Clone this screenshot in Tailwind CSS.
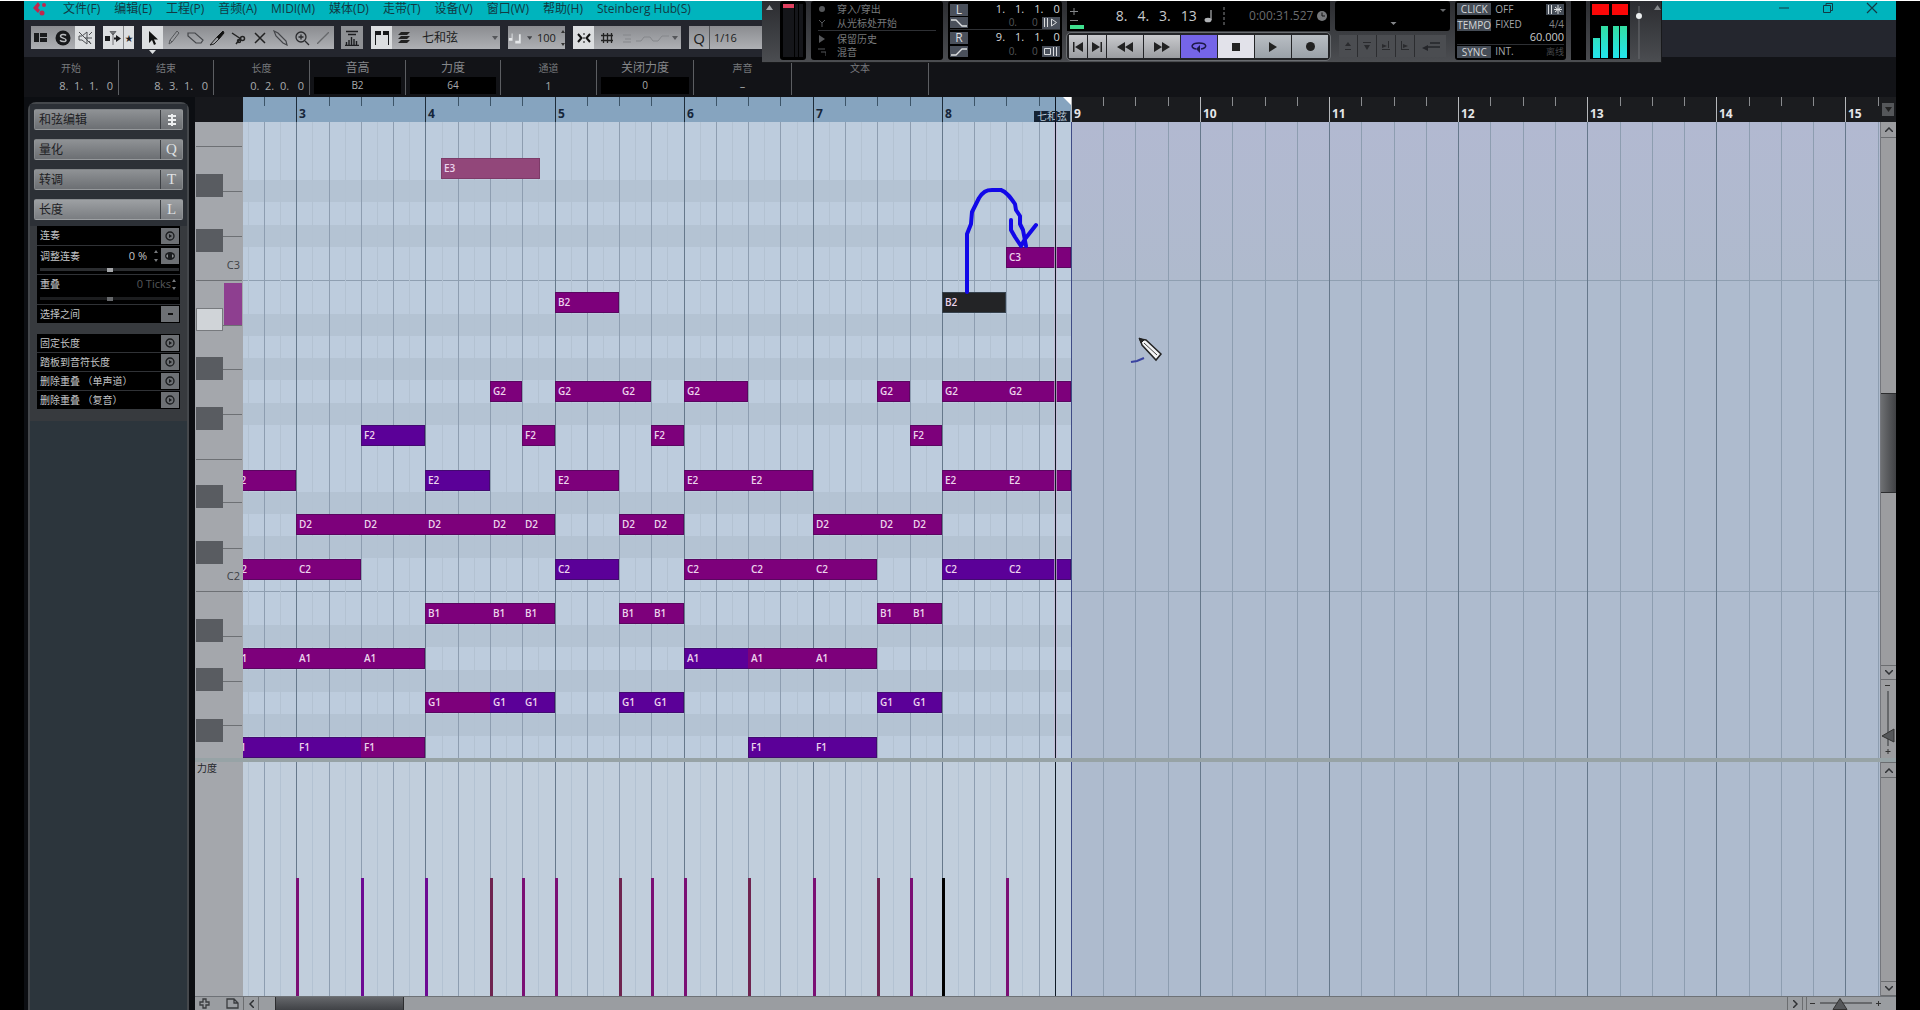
<!DOCTYPE html>
<html lang="zh-CN">
<head>
    <meta charset="UTF-8">
    <meta name="viewport" content="width=device-width, initial-scale=1.0">
    <title>Cubase - 钢琴卷帘</title>
    <script src="https://cdn.jsdelivr.net/npm/@tailwindcss/browser@4"></script>
</head>
<body class="bg-black font-['Open_Sans','Noto_Sans_CJK_SC',sans-serif]">
<div class="relative h-screen overflow-hidden flex flex-col border-t border-white px-6">

    <!-- Menu -->
    <nav class="h-[19px] shrink-0 bg-[#00b4bd] text-[#123a44] text-[12px] leading-[16px] flex items-start pl-2">
        <svg class="w-4 h-[15px] mr-[15px]" viewBox="0 0 16 15"><path d="M6 1L1 7l5 5 2-3-2-2 2-3z" fill="#c0264e"/><circle cx="12" cy="4" r="2" fill="#c0264e"/><circle cx="10" cy="12" r="2.500" fill="#c0264e"/></svg>
        <div class="flex gap-[14px]">
            <a href="#">文件(F)</a>
            <a href="#">编辑(E)</a>
            <a href="#">工程(P)</a>
            <a href="#">音频(A)</a>
            <a href="#">MIDI(M)</a>
            <a href="#">媒体(D)</a>
            <a href="#">走带(T)</a>
            <a href="#">设备(V)</a>
            <a href="#">窗口(W)</a>
            <a href="#">帮助(H)</a>
            <a href="#">Steinberg Hub(S)</a>
        </div>
        <div class="ml-auto flex gap-8 pr-[18px] pt-px">
            <button aria-label="最小化"><svg class="w-3 h-3" viewBox="0 0 12 12"><path d="M1 6h10" stroke="#123a44"/></svg></button>
            <button aria-label="还原"><svg class="w-3 h-3" viewBox="0 0 12 12" fill="none" stroke="#123a44"><path d="M1.500 3.500h7v7h-7zM4 3.500v-2h6.500v7H9"/></svg></button>
            <button aria-label="关闭"><svg class="w-3 h-3" viewBox="0 0 12 12"><path d="M1 1l10 10M11 1L1 11" stroke="#123a44" stroke-width="1.200"/></svg></button>
        </div>
    </nav>

    <!-- Toolbar -->
    <div class="h-[37px] shrink-0 bg-[#24262e] flex items-start gap-2 pl-[7px] pt-[6px] text-[#1c1d20]">
        <div class="h-[23px] flex bg-linear-to-b from-[#8b8c90] to-[#aeb0b4]">
            <button aria-label="布局" class="w-5 grid place-items-center"><svg class="w-4 h-3" viewBox="0 0 16 12"><path d="M1 1h5v9H1zM7 1h7v4H7zM7 6h7v4H7z" fill="#1a1b1d"/></svg></button>
            <button aria-label="独奏" class="w-6 grid place-items-center"><svg class="w-4 h-4" viewBox="0 0 16 16"><circle cx="8" cy="8" r="7.500" fill="#17181a"/><path d="M11 5.500C10 4 5.500 4 5.500 6.200S11 7.800 11 10s-4.500 2-6 .3" fill="none" stroke="#b8babd" stroke-width="1.500"/></svg></button>
            <button aria-label="监听" class="w-5 grid place-items-center bg-[#dcdee0]"><svg class="w-4 h-4" viewBox="0 0 16 16" fill="none" stroke="#4d4f53"><path d="M2 6h3l5-4v12L5 10H2zM8 8h7M12 5l3-3M12 11l2 3M2 2l12 12"/></svg></button>
        </div>
        <div class="h-[23px] flex bg-[#dcdee0]">
            <button aria-label="自动滚动" class="w-[21px] grid place-items-center border-r border-[#85878a]"><svg class="w-4 h-4" viewBox="0 0 16 16"><path d="M0 6h5v5H0z" fill="#1a1b1d"/><path d="M8 3v12M5 1.500h6L8 5z" fill="#77797c" stroke="#55575a" stroke-width=".8"/><path d="M9 7.500h2V5l5 3.500-5 3.500V9.500H9z" fill="#1a1b1d"/></svg></button>
            <button aria-label="暂停滚动" class="w-[10px] text-[8px]">★</button>
        </div>
        <div class="h-[23px] flex bg-linear-to-b from-[#8b8c90] to-[#aeb0b4]">
            <button aria-label="选择" class="relative w-[21px] grid place-items-center bg-[#dcdee0]"><svg class="w-4 h-4" viewBox="0 0 16 16"><path d="M4 1v12l3-3 2 5 2-1-2-4.500h4z" fill="#111"/></svg><svg class="absolute top-[24px] left-[7px] w-[7px] h-1" viewBox="0 0 7 4"><path d="M0 0h7L3.500 4z" fill="#dcdee0"/></svg></button>
            <button aria-label="铅笔" class="w-[22px] grid place-items-center"><svg class="w-4 h-4" viewBox="0 0 16 16" fill="none" stroke="#55575a"><path d="M3 14l1-4 7-9 2 2-7 9zM4 10l2 2"/></svg></button>
            <button aria-label="橡皮" class="w-[21px] grid place-items-center"><svg class="w-[18px] h-4" viewBox="0 0 18 16" fill="none" stroke="#44464a" stroke-width="1.200"><path d="M1 3h7l8 7-2 3H9L1 6z"/></svg></button>
            <button aria-label="修剪" class="w-[21px] grid place-items-center"><svg class="w-4 h-4" viewBox="0 0 16 16"><path d="M14 1l1 2-5 6-2-2z" fill="#111" stroke="#111"/><path d="M8 7l2 2-5 5-4 1z" fill="none" stroke="#222"/></svg></button>
            <button aria-label="剪刀" class="w-[22px] grid place-items-center"><svg class="w-4 h-4" viewBox="0 0 16 16" fill="none" stroke="#222" stroke-width="1.500"><path d="M2 3l9 6M6 14l4-5"/><circle cx="12.500" cy="8.500" r="2"/><circle cx="9" cy="11" r="1.500"/></svg></button>
            <button aria-label="静音" class="w-[21px] grid place-items-center"><svg class="w-3 h-3" viewBox="0 0 12 12"><path d="M1 1l10 10M11 1L1 11" stroke="#222" stroke-width="1.500"/></svg></button>
            <button aria-label="胶水" class="w-[21px] grid place-items-center"><svg class="w-4 h-4" viewBox="0 0 16 16" fill="none" stroke="#44464a" stroke-width="1.200"><path d="M1 1l4 2 8 8 1 4-4-2-7-7z"/></svg></button>
            <button aria-label="缩放" class="w-[21px] grid place-items-center"><svg class="w-4 h-4" viewBox="0 0 16 16" fill="none" stroke="#2a2b2e" stroke-width="1.300"><circle cx="7" cy="7" r="5"/><path d="M11 11l4 4M4.500 7h5M7 4.500v5"/></svg></button>
            <button aria-label="直线" class="w-[22px] grid place-items-center"><svg class="w-3 h-3" viewBox="0 0 12 12"><path d="M0 12L12 0" stroke="#66686b" stroke-width="1.300"/></svg></button>
        </div>
        <button aria-label="控制器" class="h-[23px] w-[22px] -ml-px bg-[#8f9195] grid place-items-center"><svg class="w-4 h-4" viewBox="0 0 16 16" stroke="#1c1d20" fill="none"><path d="M2 1.500h12M4 4.500h8M1 15.500h14M2.500 15v-3M5 15v-5M7.500 15V7M10 15V9M12.500 15v-4" stroke-width="1.400"/></svg></button>
        <div class="h-[23px] w-[129px] flex items-center bg-linear-to-b from-[#8b8c90] to-[#aeb0b4]">
            <button aria-label="显示音符" class="w-[21px] h-full grid place-items-center bg-[#dcdee0]"><svg class="w-4 h-4" viewBox="0 0 16 16"><path d="M1 1h6v4H2v10H1zM9 1h6v14h-1V5H9z" fill="#17181a"/></svg></button>
            <svg class="w-3 h-[14px] ml-[6px]" viewBox="0 0 12 14"><path d="M3 1h9l-3 3H0zM3 5h9l-3 3H0zM3 9h9l-3 3H0z" fill="#222"/></svg>
            <select aria-label="部件" class="appearance-none flex-1 pl-[12px] text-[12px] leading-[20px]"><option>七和弦</option></select>
            <svg class="w-[6px] h-1 mr-[2px]" viewBox="0 0 6 4"><path d="M0 0h6L3 4z" fill="#55575a"/></svg>
        </div>
        <div class="h-[23px] w-[57px] flex items-center bg-linear-to-b from-[#8b8c90] to-[#aeb0b4]">
            <svg class="w-4 h-4" viewBox="0 0 16 16" fill="#e4e6e8"><path d="M4 3h1v8H1V8h3zM12 4h2v10H8v-3h4z"/></svg>
            <svg class="w-[6px] h-1 ml-1" viewBox="0 0 6 4"><path d="M0 0h6L3 4z" fill="#44464a"/></svg>
            <input aria-label="插入力度" value="100" class="w-6 ml-[5px] text-[11px] leading-[20px]">
            <span class="flex flex-col justify-between h-4"><svg class="w-1 h-[3px]" viewBox="0 0 4 3"><path d="M0 3h4L2 0z" fill="#333"/></svg><svg class="w-1 h-[3px]" viewBox="0 0 4 3"><path d="M0 0h4L2 3z" fill="#333"/></svg></span>
        </div>
        <div class="h-[23px] w-[108px] flex items-center bg-linear-to-b from-[#8b8c90] to-[#aeb0b4]">
            <button aria-label="吸附" class="w-[21px] h-full grid place-items-center bg-[#dcdee0]"><svg class="w-[14px] h-3" viewBox="0 0 14 12" fill="none" stroke="#111" stroke-width="2"><path d="M1 2l3.500 4L1 10M13 2L9.500 6l3.500 4"/><path d="M7 1v10" stroke-width="1" stroke-dasharray="2 2"/></svg></button>
            <svg class="w-3 h-3 ml-[7px]" viewBox="0 0 12 12" stroke="#222" stroke-width="1.300"><path d="M2.500 1v10M6.500 1v10M10.500 1v10M0 3.500h12M0 8.500h12"/></svg>
            <svg class="w-[48px] h-3 ml-[9px]" viewBox="0 0 48 12" stroke="#85878b" fill="none"><path d="M1 3h8M3 7h6M1 10h8M14 9h5l3-4h6l3 4h5l4-5h7"/></svg>
            <svg class="w-[6px] h-1 ml-auto mr-[3px]" viewBox="0 0 6 4"><path d="M0 0h6L3 4z" fill="#55575a"/></svg>
        </div>
        <div class="h-[23px] w-[90px] flex items-center bg-linear-to-b from-[#8b8c90] to-[#aeb0b4]">
            <button aria-label="应用量化" class="w-[21px] h-full border-r border-[#55575a] text-[15px] leading-[20px]">Q</button>
            <select aria-label="量化预设" class="appearance-none flex-1 pl-[4px] text-[11px] leading-[20px]"><option>1/16</option></select>
        </div>
    </div>

    <!-- Info line -->
    <div class="h-10 shrink-0 bg-[#121317] flex pt-[3px] pb-[2px] text-[#a9abad] text-[10px] text-center">
        <label class="w-[95px] pt-px border-r border-[#5c5e62] flex flex-col"><span class="leading-[14px] h-[17px] text-[#77797c]">开始</span><input value="8.  1.  1.   0" class="w-full pr-[5px] text-right text-[11px] leading-[16px]"></label>
        <label class="w-[95px] pt-px border-r border-[#5c5e62] flex flex-col"><span class="leading-[14px] h-[17px] text-[#77797c]">结束</span><input value="8.  3.  1.   0" class="w-full pr-[5px] text-right text-[11px] leading-[16px]"></label>
        <label class="w-24 pt-px border-r border-[#5c5e62] flex flex-col"><span class="leading-[14px] h-[17px] text-[#77797c]">长度</span><input value="0.  2.  0.   0" class="w-full pr-[5px] text-right text-[11px] leading-[16px]"></label>
        <label class="w-24 px-1 border-r border-[#5c5e62] flex flex-col"><span class="leading-[15px] h-[17px] text-[12px] text-[#85878a]">音高</span><input value="B2" class="w-full bg-black text-center text-[10px] leading-[17px]"></label>
        <label class="w-[95px] px-1 border-r border-[#5c5e62] flex flex-col"><span class="leading-[15px] h-[17px] text-[12px] text-[#85878a]">力度</span><input value="64" class="w-full bg-black text-center text-[10px] leading-[17px]"></label>
        <label class="w-24 pt-px px-1 border-r border-[#5c5e62] flex flex-col"><span class="leading-[14px] h-[17px] text-[#77797c]">通道</span><input value="1" class="w-full text-center text-[11px] leading-[16px]"></label>
        <label class="w-[97px] px-1 border-r border-[#5c5e62] flex flex-col"><span class="leading-[15px] h-[17px] text-[12px] text-[#85878a]">关闭力度</span><input value="0" class="w-full bg-black text-center text-[10px] leading-[17px]"></label>
        <label class="w-[98px] pt-px px-1 border-r border-[#5c5e62] flex flex-col"><span class="leading-[14px] h-[17px] text-[#77797c]">声音</span><input value="–" class="w-full text-center text-[11px] leading-[16px]"></label>
        <label class="w-[137px] pt-px px-1 border-r border-[#5c5e62] flex flex-col"><span class="leading-[14px] h-[17px] text-[#77797c]">文本</span><input value="" class="w-full"></label>
    </div>

    <div class="flex-1 min-h-0 flex bg-[#0c0e12]">
        <!-- Inspector -->
        <aside class="w-[161px] ml-1 mr-[2px] mt-[5px] shrink-0 rounded-t-lg border-2 border-b-0 border-[#45484c] bg-[#2c353c] text-[12px] text-[#1d2023]">
            <div class="flex flex-col gap-[9px] px-[4px] pt-[5px] pb-[6px] bg-[#2c3036]">
                <button class="h-[21px] flex items-center rounded-[2px] bg-linear-to-b from-[#8f9295] to-[#6c6f73] border border-[#a0a2a5]/40"><span class="flex-1 text-left pl-1 leading-[18px]">和弦编辑</span><span class="w-[22px] h-full border-l border-[#3c3f43] grid place-items-center"><svg class="w-3 h-[14px]" viewBox="0 0 12 14" stroke="#eceeef" stroke-width="2"><path d="M2 3h8M2 7h8M2 11h8M6 1v12"/></svg></span></button>
                <button class="h-[21px] flex items-center rounded-[2px] bg-linear-to-b from-[#8f9295] to-[#6c6f73] border border-[#a0a2a5]/40"><span class="flex-1 text-left pl-1 leading-[18px]">量化</span><span class="w-[22px] h-full border-l border-[#3c3f43] text-[#dfe1e3] text-[15px] leading-[18px] font-['Liberation_Serif',serif]">Q</span></button>
                <button class="h-[21px] flex items-center rounded-[2px] bg-linear-to-b from-[#8f9295] to-[#6c6f73] border border-[#a0a2a5]/40"><span class="flex-1 text-left pl-1 leading-[18px]">转调</span><span class="w-[22px] h-full border-l border-[#3c3f43] text-[#dfe1e3] text-[15px] leading-[18px] font-['Liberation_Serif',serif]">T</span></button>
                <button class="h-[21px] flex items-center rounded-[2px] bg-linear-to-b from-[#9da0a3] to-[#7a7d81] border border-[#a0a2a5]/40"><span class="flex-1 text-left pl-1 leading-[18px]">长度</span><span class="w-[22px] h-full border-l border-[#3c3f43] text-[#dfe1e3] text-[15px] leading-[18px] font-['Liberation_Serif',serif]">L</span></button>
            </div>
            <div class="bg-[#373a3e] px-[7px] pb-3 text-[10px] text-[#c3c5c7]">
                <div class="flex flex-col gap-px bg-[#303236]">
                    <div class="h-[19px] flex items-center justify-between bg-black pl-[3px]">连奏<button aria-label="连奏" class="w-[18px] h-4 mr-px bg-[#6d7074] grid place-items-center"><svg class="w-[10px] h-[10px]" viewBox="0 0 10 10"><circle cx="5" cy="5" r="4" fill="none" stroke="#1a1c1e" stroke-width="1.300"/><path d="M4 3l3 2-3 2z" fill="#1a1c1e"/></svg></button></div>
                    <div class="h-7 bg-black pl-[3px]">
                        <div class="h-[20px] flex items-center"><label for="legato">调整连奏</label><span class="ml-auto mr-[7px] text-[11px]">0 %</span><span class="flex flex-col gap-[6px] mr-[3px]"><svg class="w-1 h-[3px]" viewBox="0 0 4 3"><path d="M0 3h4L2 0z" fill="#77797c"/></svg><svg class="w-1 h-[3px]" viewBox="0 0 4 3"><path d="M0 0h4L2 3z" fill="#77797c"/></svg></span><button aria-label="连奏模式" class="w-[18px] h-4 mr-px bg-[#6d7074] grid place-items-center"><svg class="w-3 h-[10px]" viewBox="0 0 12 10"><ellipse cx="6" cy="5" rx="5" ry="4" fill="#1a1c1e"/><path d="M2 5l2-2v4zM10 5L8 3v4z" fill="#8a8d90"/></svg></button></div>
                        <input id="legato" type="range" class="block w-[139px] h-[3px] mt-[2px] appearance-none bg-[#2b2d30] [&::-webkit-slider-thumb]:appearance-none [&::-webkit-slider-thumb]:w-[6px] [&::-webkit-slider-thumb]:h-[4px] [&::-webkit-slider-thumb]:bg-[#a5a7aa]">
                    </div>
                    <div class="h-[29px] bg-black pl-[3px]">
                        <div class="h-[18px] flex items-center"><label for="overlap">重叠</label><span class="ml-auto text-[11px] text-[#55575a]">0 Ticks</span><span class="flex flex-col gap-[5px] ml-px mr-[4px]"><svg class="w-1 h-[3px]" viewBox="0 0 4 3"><path d="M0 3h4L2 0z" fill="#77797c"/></svg><svg class="w-1 h-[3px]" viewBox="0 0 4 3"><path d="M0 0h4L2 3z" fill="#77797c"/></svg></span></div>
                        <input id="overlap" type="range" class="block w-[139px] h-[3px] mt-[4px] appearance-none bg-[#1c1d1f] [&::-webkit-slider-thumb]:appearance-none [&::-webkit-slider-thumb]:w-[6px] [&::-webkit-slider-thumb]:h-[4px] [&::-webkit-slider-thumb]:bg-[#66686b]">
                    </div>
                    <div class="h-[18px] flex items-center justify-between bg-black pl-[3px]">选择之间<button aria-label="选择之间" class="w-[18px] h-4 mr-px bg-[#6d7074] grid place-items-center"><span class="w-[5px] h-[2px] bg-[#111]"></span></button></div>
                </div>
                <div id="functions" class="mt-[11px] flex flex-col gap-px bg-[#303236]"></div>
            </div>
        </aside>

        <!-- Key editor -->
        <main class="flex-1 min-w-0 flex flex-col ml-1">
            <div class="h-[25px] shrink-0 flex bg-[#1b1c1f]">
                <div class="w-12 bg-[#17181c]"></div>
                <div id="ruler" class="relative flex-1 overflow-hidden text-[12px] leading-[14px] font-bold"></div>
                <button aria-label="标尺格式" class="w-3 h-[13px] mt-[6px] ml-[2px] mr-[2px] bg-[#55575a] grid place-items-center"><svg class="w-[7px] h-[5px]" viewBox="0 0 7 5"><path d="M0 0h7L3.500 5z" fill="#222"/></svg></button>
            </div>
            <div class="flex-1 min-h-0 flex">
                <div id="keys" class="relative w-12 shrink-0 overflow-hidden bg-[#a4a7ac] text-[11px] leading-[14px] text-[#3d4044]"></div>
                <div id="roll" class="relative flex-1 overflow-hidden bg-[#bdccdd] text-[10px] text-[#ecd3ec]"></div>
                <div class="w-4 shrink-0 flex flex-col bg-[#9c9da0] border-l border-[#74767c]">
                    <button aria-label="向上" class="h-4 border-b border-[#6b6d70] grid place-items-center"><svg class="w-2 h-[5px]" viewBox="0 0 8 5"><path d="M0 5l4-4 4 4" fill="none" stroke="#2f3134" stroke-width="1.500"/></svg></button>
                    <div class="flex-1 pt-[255px]"><div class="h-[100px] border-y border-[#2c2d2f] bg-linear-to-r from-[#6e7073] to-[#404144]"></div></div>
                    <button aria-label="向下" class="h-[15px] border-y border-[#6b6d70] grid place-items-center"><svg class="w-2 h-[5px]" viewBox="0 0 8 5"><path d="M0 0l4 4 4-4" fill="none" stroke="#2f3134" stroke-width="1.500"/></svg></button>
                    <svg class="w-[14px] h-[78px]" viewBox="0 0 14 78"><path d="M4 5.500h5M4.500 71.500h5M7 69v5" stroke="#333"/><path d="M6 11h2v55H6z" fill="#66686b"/><path d="M1 56l12-7v13z" fill="#55575a" stroke="#333"/></svg>
                </div>
            </div>
            <div class="h-1 shrink-0 bg-[#97a3a6]"></div>
            <div class="h-[234px] shrink-0 flex">
                <div class="w-12 bg-[#a4a7ac] text-[10px] leading-[12px] pl-[2px] text-[#26282b]">力度</div>
                <div id="lane" class="relative flex-1 overflow-hidden bg-[#c1cedc]"></div>
                <div class="w-4 shrink-0 flex flex-col justify-between bg-[#9c9da0] border-l border-[#74767c]">
                    <button aria-label="向上" class="h-4 border-y border-[#6b6d70] grid place-items-center"><svg class="w-2 h-[5px]" viewBox="0 0 8 5"><path d="M0 5l4-4 4 4" fill="none" stroke="#2f3134" stroke-width="1.500"/></svg></button>
                    <button aria-label="向下" class="h-[15px] border-y border-[#6b6d70] grid place-items-center"><svg class="w-2 h-[5px]" viewBox="0 0 8 5"><path d="M0 0l4 4 4-4" fill="none" stroke="#2f3134" stroke-width="1.500"/></svg></button>
                </div>
            </div>
            <div class="h-[14px] shrink-0 flex bg-[#9a9da1] border-t border-[#6e7277]">
                <div class="w-12 flex justify-between items-center pl-1 pr-1">
                    <button aria-label="添加控制器"><svg class="block w-[11px] h-[11px]" viewBox="0 0 11 11"><path d="M4 1h3v3h3v3H7v3H4V7H1V4h3z" fill="none" stroke="#3a3c3f" stroke-width="1.300"/></svg></button>
                    <button aria-label="控制器预设"><svg class="block w-[13px] h-[11px]" viewBox="0 0 13 11"><path d="M1 1h7l4 4v5H1zM8 1v4h4" fill="none" stroke="#3a3c3f" stroke-width="1.300"/></svg></button>
                </div>
                <button aria-label="向左" class="w-4 border-x border-[#6b6d70] grid place-items-center"><svg class="w-[5px] h-2" viewBox="0 0 5 8"><path d="M5 0L1 4l4 4" fill="none" stroke="#2f3134" stroke-width="1.500"/></svg></button>
                <div class="flex-1 pl-4"><div class="w-[129px] h-full border-x border-[#2c2d2f] bg-linear-to-b from-[#66686c] to-[#404246]"></div></div>
                <button aria-label="向右" class="w-4 border-x border-[#6b6d70] grid place-items-center"><svg class="w-[5px] h-2" viewBox="0 0 5 8"><path d="M0 0l4 4-4 4" fill="none" stroke="#2f3134" stroke-width="1.500"/></svg></button>
                <svg class="w-[93px] h-[13px]" viewBox="0 0 93 13"><path d="M3.500 0v13" stroke="#6b6d70"/><path d="M7 6.500h5M73 6.500h5M75.500 4v5" stroke="#333"/><path d="M17 6h52" stroke="#66686b" stroke-width="2"/><path d="M30 12.500l7-11 7 11z" fill="#55575a" stroke="#333"/></svg>
            </div>
        </main>
    </div>

    <!-- Transport panel, floats over the toolbar -->
    <section class="absolute left-[762px] top-0 h-[62px] w-[900px] flex bg-linear-to-b from-[#2c2d31] to-[#4b4d51] border-b border-r border-[#18191b] text-[10px]">
        <div class="w-[18px] pt-[4px] pl-[4px]"><svg class="w-[7px] h-[5px]" viewBox="0 0 7 5"><path d="M0 5h7L3.500 0z" fill="#a5a7aa"/></svg></div>
        <div class="w-[26px] h-[59px] bg-black rounded-[3px] flex gap-px px-[3px] pt-[3px] pb-[3px]"><div class="w-3 bg-[#15161a]"><div class="h-[4px] bg-[#e0405f]"></div></div><div class="w-1 bg-[#15161a]"></div><div class="w-1 bg-[#15161a]"></div></div>
        <div class="w-[132px] h-[59px] ml-[5px] bg-black rounded-[3px] px-[7px] pt-px pb-[2px] text-[#77797c]">
            <div class="h-[14px] flex items-center gap-[11px]"><svg class="w-2 h-2" viewBox="0 0 8 8"><circle cx="4" cy="4" r="3" fill="#55575a"/></svg><button class="leading-[14px]">穿入/穿出</button></div>
            <div class="h-[15px] flex items-center gap-[11px] border-b border-[#2e3034]"><svg class="w-2 h-2" viewBox="0 0 8 8"><path d="M1 1l3 3 3-3M4 3v5" fill="none" stroke="#55575a"/></svg><button class="leading-[14px]">从光标处开始</button></div>
            <div class="h-[15px] flex items-center gap-[11px]"><svg class="w-2 h-2" viewBox="0 0 8 8"><path d="M1 0l6 4-6 4z" fill="#55575a"/></svg><button class="leading-[14px]">保留历史</button></div>
            <div class="h-[12px] flex items-center gap-[11px]"><svg class="w-2 h-2" viewBox="0 0 8 8"><path d="M0 1h7M3 4h5v4" fill="none" stroke="#55575a"/></svg><button class="leading-[14px]">混音</button></div>
        </div>
        <div class="w-[114px] h-[59px] ml-[5px] bg-black rounded-[3px] pl-[2px] pr-[2px] py-[2px] text-[11px] text-[#d5d7d9]">
            <div class="h-[13px] flex items-center"><button class="w-[18px] h-3 bg-[#4a505b] text-[12px] leading-[12px] text-[#dcdee0]">L</button><span class="ml-auto flex gap-[10px]"><span>1.</span><span>1.</span><span>1.</span><span>0</span></span></div>
            <div class="h-[14px] flex items-center border-b border-[#2e3034]"><button aria-label="预卷" class="w-[18px] h-[11px] bg-[#4a505b] grid place-items-center"><svg class="w-4 h-2" viewBox="0 0 16 8"><path d="M0 1h5l6 6h5" fill="none" stroke="#dcdee0" stroke-width="1.300"/></svg></button><span class="ml-auto flex gap-[15px] pr-[4px] text-[10px] text-[#55575a]"><span>0.</span><span>0</span></span><button aria-label="预卷开关" class="w-[18px] h-3 bg-[#4a505b] grid place-items-center"><svg class="w-[15px] h-[9px]" viewBox="0 0 15 9"><path d="M1.500 0v9M4.500 0v9M8.500 1v7l5-3.500z" fill="none" stroke="#dcdee0"/></svg></button></div>
            <div class="h-[15px] flex items-center"><button class="w-[18px] h-3 bg-[#4a505b] text-[12px] leading-[12px] text-[#dcdee0]">R</button><span class="ml-auto flex gap-[10px]"><span>9.</span><span>1.</span><span>1.</span><span>0</span></span></div>
            <div class="h-[13px] flex items-center"><button aria-label="后卷" class="w-[18px] h-[11px] bg-[#4a505b] grid place-items-center"><svg class="w-4 h-2" viewBox="0 0 16 8"><path d="M0 7h5l6-6h5" fill="none" stroke="#dcdee0" stroke-width="1.300"/></svg></button><span class="ml-auto flex gap-[15px] pr-[4px] text-[10px] text-[#55575a]"><span>0.</span><span>0</span></span><button aria-label="后卷开关" class="w-[18px] h-[11px] bg-[#4a505b] grid place-items-center"><svg class="w-[15px] h-[9px]" viewBox="0 0 15 9"><path d="M1.500 1.500h6v6h-6zM10.500 0v9M13.500 0v9" fill="none" stroke="#dcdee0"/></svg></button></div>
        </div>
        <div class="w-[264px] ml-[5px] flex flex-col">
            <div class="h-[30px] bg-black flex items-center text-[#c8cacc]">
                <svg class="w-4 h-[26px] ml-[1px]" viewBox="0 0 16 26"><path d="M2 8.500h8M6 5v7M2 17.500h8" stroke="#85878a"/><path d="M2 22h14v4H2z" fill="#3fe08f"/></svg>
                <div class="flex gap-[10px] ml-[32px] text-[14px] leading-[20px]"><span>8.</span><span>4.</span><span>3.</span><span>13</span></div>
                <svg class="w-[10px] h-[14px] ml-[7px]" viewBox="0 0 10 14"><ellipse cx="4" cy="11" rx="3.500" ry="2.300" fill="#b0b2b5"/><path d="M7 11V1" stroke="#b0b2b5" stroke-width="1.200"/></svg>
                <svg class="w-1 h-[18px] ml-2" viewBox="0 0 4 18"><path d="M2 0v18" stroke="#85878a" stroke-dasharray="3 2"/></svg>
                <span class="ml-auto text-[12px] text-[#6a6c6f]">0:00:31.527</span>
                <svg class="w-[10px] h-[10px] ml-1 mr-[3px]" viewBox="0 0 10 10"><circle cx="5" cy="5" r="5" fill="#77797c"/><path d="M5 1.500V5h3" fill="none" stroke="#111"/></svg>
            </div>
            <div class="h-[27px] mt-[2px] rounded-[4px] border-2 border-[#232427] outline outline-[#6b6e72] grid grid-cols-[18px_18px_36px_36px_36px_36px_36px_1fr] gap-px bg-[#232427] text-[#1e2023]">
                <button aria-label="到开头" class="grid place-items-center bg-linear-to-b from-[#c9cacd] to-[#9b9da1]"><svg class="w-3 h-[10px]" viewBox="0 0 12 10"><path d="M1 0h1.500v10H1zM11 0v10L3 5z" fill="#222"/></svg></button>
                <button aria-label="到结尾" class="grid place-items-center bg-linear-to-b from-[#c9cacd] to-[#9b9da1]"><svg class="w-3 h-[10px]" viewBox="0 0 12 10"><path d="M9.500 0H11v10H9.500zM1 0v10l8-5z" fill="#222"/></svg></button>
                <button aria-label="后退" class="grid place-items-center bg-linear-to-b from-[#c9cacd] to-[#9b9da1]"><svg class="w-4 h-[10px]" viewBox="0 0 16 10"><path d="M8 0v10L0 5zM16 0v10L8 5z" fill="#222"/></svg></button>
                <button aria-label="快进" class="grid place-items-center bg-linear-to-b from-[#c9cacd] to-[#9b9da1]"><svg class="w-4 h-[10px]" viewBox="0 0 16 10"><path d="M0 0v10l8-5zM8 0v10l8-5z" fill="#222"/></svg></button>
                <button aria-label="循环" class="grid place-items-center bg-[#7565e8]"><svg class="w-4 h-3" viewBox="0 0 16 12"><path d="M10 8c7-1 6-6-2-6S-1 7 5 8" fill="none" stroke="#1d1947" stroke-width="1.500"/><path d="M5 8l4-4v8z" fill="#1d1947"/></svg></button>
                <button aria-label="停止" class="grid place-items-center bg-[#e2e2ea]"><span class="w-2 h-2 bg-[#222]"></span></button>
                <button aria-label="播放" class="grid place-items-center bg-linear-to-b from-[#b9bec4] to-[#9aa1a8]"><svg class="w-2 h-[10px]" viewBox="0 0 8 10"><path d="M0 0v10l8-5z" fill="#222"/></svg></button>
                <button aria-label="录音" class="grid place-items-center bg-linear-to-b from-[#b9bec4] to-[#9aa1a8]"><span class="w-[9px] h-[9px] rounded-full bg-[#222]"></span></button>
            </div>
        </div>
        <div class="w-[115px] ml-[5px]">
            <div class="relative h-[30px] bg-black rounded-[3px]"><svg class="absolute right-1 top-2 w-[6px] h-[3px]" viewBox="0 0 6 3"><path d="M0 0h6L3 3z" fill="#66686b"/></svg><svg class="absolute left-[55px] bottom-[6px] w-[7px] h-[3px]" viewBox="0 0 6 3"><path d="M0 0h6L3 3z" fill="#85878a"/></svg></div>
            <div class="h-[22px] mt-[4px] mx-[4px] grid grid-cols-[18px_18px_18px_18px_1fr] gap-px bg-[#2c2d30]">
                <button aria-label="标记 1" class="grid place-items-center bg-[#4b4d51]"><svg class="w-2 h-[10px]" viewBox="0 0 8 10"><path d="M1 5h6L4 1zM1 8h6v1H1z" fill="#2a2b2e"/></svg></button>
                <button aria-label="标记 2" class="grid place-items-center bg-[#4b4d51]"><svg class="w-2 h-[10px]" viewBox="0 0 8 10"><path d="M0 1h8v1H0zM1 4h6L4 9z" fill="#2a2b2e"/></svg></button>
                <button aria-label="标记 3" class="grid place-items-center bg-[#4b4d51]"><svg class="w-2 h-[10px]" viewBox="0 0 8 10"><path d="M6 0h1v7H6zM0 3l5 2-5 2zM0 8h8v1H0z" fill="#2a2b2e"/></svg></button>
                <button aria-label="标记 4" class="grid place-items-center bg-[#4b4d51]"><svg class="w-2 h-[10px]" viewBox="0 0 8 10"><path d="M0 0h1v9H0zM2 3l5 2-5 2zM0 8h8v1H0z" fill="#2a2b2e"/></svg></button>
                <button aria-label="标记 5" class="grid place-items-center bg-[#4b4d51]"><svg class="w-[18px] h-[10px]" viewBox="0 0 18 10"><path d="M8 2h10M5 6h13" stroke="#25262a" stroke-width="1.500"/><path d="M0 7l6-3v6z" fill="#25262a"/></svg></button>
            </div>
        </div>
        <div class="w-[111px] h-[59px] ml-[5px] bg-black rounded-[3px] p-[2px] pt-px text-[10px] text-[#a5a7aa]">
            <div class="h-[14px] flex items-center"><button class="w-[34px] h-3 leading-[12px] bg-[#454c56] text-[#d5d7d9]">CLICK</button><span class="ml-1">OFF</span><button aria-label="预备拍" class="ml-auto w-[18px] h-[11px] bg-[#454c56] grid place-items-center"><svg class="w-4 h-[9px]" viewBox="0 0 16 9"><path d="M1.500 0v9M4.500 0v9M11 0v9M7 4.500h8M8 2l6 5M14 2L8 7" stroke="#dcdee0"/></svg></button></div>
            <div class="h-[16px] pt-px flex items-center"><button class="w-[34px] h-3 leading-[12px] bg-[#454c56] text-[#d5d7d9]">TEMPO</button><span class="ml-1">FIXED</span><span class="ml-auto text-[#85878a]">4/4</span></div>
            <div class="h-[13px] text-right text-[11px] leading-[10px] border-b border-[#2e3034] text-[#c8cacc]">60.000</div>
            <div class="h-[13px] flex items-center"><button class="w-[34px] h-3 leading-[12px] bg-[#454c56] text-[#d5d7d9]">SYNC</button><span class="ml-1">INT.</span><span class="ml-auto text-[9px] text-[#45474a]">离线</span></div>
        </div>
        <div class="w-[15px] h-[59px] ml-[5px] bg-black"></div>
        <div class="w-[40px] h-[58px] ml-[4px] bg-black flex gap-[3px] px-[2px] pt-[3px] pb-px">
            <div class="flex-1 flex flex-col"><div class="h-[11px] bg-[#fb0707]"></div><div class="flex-1 flex items-end gap-px px-px"><div class="flex-1 h-5 bg-linear-to-b from-[#2fe0c0] to-[#23e5ee]"></div><div class="flex-1 h-8 bg-linear-to-b from-[#33dda0] to-[#23e5ee]"></div></div></div>
            <div class="flex-1 flex flex-col"><div class="h-[11px] bg-[#fb0707]"></div><div class="flex-1 flex items-end gap-px px-px"><div class="flex-1 h-8 bg-linear-to-b from-[#33dda0] to-[#23e5ee]"></div><div class="flex-1 h-8 bg-linear-to-b from-[#33dda0] to-[#23e5ee]"></div></div></div>
        </div>
        <svg class="w-[12px] h-[58px] ml-[3px]" viewBox="0 0 12 58"><path d="M6 5v53" stroke="#6b6e72"/><circle cx="6" cy="15" r="3" fill="#eceeef"/></svg>
        <svg class="w-[7px] h-[5px] ml-[9px] mt-[4px]" viewBox="0 0 7 5"><path d="M0 5h7L3.500 0z" fill="#85878a"/></svg>
    </section>
</div>

<script>
    const BAR = 129.1;      // width of one bar
    const LEFT = 53.3;      // bar 3, from the left edge of the roll
    const ROW = 44.5;       // height of one diatonic step
    const HEAD = 812;       // playhead
    const NOTE_H = 21;
    const xOf = bar => Math.round(LEFT + (bar - 3) * BAR);
    const yOf = step => Math.round(125.4 + step * ROW);   // step 0 = C3

    function add(parent, cls, box, text) {
        const el = document.createElement('div');
        el.className = 'absolute ' + cls;
        for (const k in box) el.style[k] = box[k] + 'px';
        if (text) el.textContent = text;
        parent.appendChild(el);
        return el;
    }

    const ruler = document.getElementById('ruler');
    const keys = document.getElementById('keys');
    const roll = document.getElementById('roll');
    const lane = document.getElementById('lane');
    const END = xOf(9);

    // Ruler
    add(ruler, 'inset-y-0 bg-[#86a4bf]', { left: 0, width: END });
    for (let q = 10; q <= 61; q++) {
        const bar = q / 4, x = xOf(bar), dark = bar < 9;
        if (bar % 1) {
            add(ruler, dark ? 'top-0 w-px h-[9px] bg-[#3c5468]' : 'top-0 w-px h-[9px] bg-[#8a8c8f]', { left: x });
        } else {
            add(ruler, dark ? 'inset-y-0 w-px bg-[#1d2c3a]' : 'inset-y-0 w-px bg-[#b5b7ba]', { left: x });
            add(ruler, dark ? 'top-[10px] text-[#16263a]' : 'top-[10px] text-[#e5e6e8]', { left: x + 3 }, String(bar));
        }
    }
    add(ruler, 'bottom-0 h-[11px] bg-[#142232] text-[#b9c8d6] text-[10px] leading-[11px] font-normal text-center', { left: END - 37, width: 36 }, '七和弦');
    add(ruler, 'top-0 h-2 w-2 bg-white [clip-path:polygon(0_0,100%_0,100%_100%)]', { left: END - 8 });
    add(ruler, 'inset-y-0 w-px bg-[#0c1420]', { left: HEAD });

    // Keyboard
    for (const y of [24, 158, 337, 469]) add(keys, 'left-px right-px h-px bg-[#6d7074]', { top: y });
    for (const y of [69, 114, 203, 247, 292, 380, 426, 514, 559, 603]) add(keys, 'left-7 right-px h-px bg-[#6d7074]', { top: y });
    for (const y of [52, 107, 235, 285, 363, 419, 497, 546, 597]) add(keys, 'left-px w-[27px] h-[23px] bg-[#595c61]', { top: y });
    add(keys, 'left-px w-[27px] h-[23px] bg-[#d0d4d8] border border-[#777a7e]', { top: 186 });
    add(keys, 'left-[29px] right-px h-[42px] bg-[#8e3f90]', { top: 161 });
    add(keys, 'right-[3px]', { top: 136 }, 'C3');
    add(keys, 'right-[3px]', { top: 447 }, 'C2');

    // Row shading for black keys, then the part of the song after the last bar
    for (const s of [-2, -1, 1, 2, 3, 5, 6, 8, 9, 10]) {
        add(roll, 'inset-x-0 h-[22px] bg-[#b4c3d3]', { top: yOf(s) + 22 });
    }
    add(roll, 'top-0 bottom-0 right-0 bg-[#aebbce]', { left: END });
    add(roll, 'top-0 right-0 h-[158px] bg-linear-to-b from-[#b2b9d1] to-[#afbacd]', { left: END });
    add(lane, 'top-0 bottom-0 right-0 bg-[#aebbce]', { left: END });
    for (const y of [158, 469]) add(roll, 'inset-x-0 h-px bg-[#8f9fb1]', { top: y });

    // Grid
    for (const area of [roll, lane]) {
        for (let e = 20; e <= 122; e++) {
            const bar = e / 8, x = xOf(bar);
            if (e % 8 === 0) add(area, 'inset-y-0 w-px bg-[#66788b]', { left: x });
            else if (e % 2 === 0) add(area, 'inset-y-0 w-px bg-[#8d9db0]', { left: x });
            else if (bar < 9) add(area, 'inset-y-0 w-px bg-[#b3c2d2]', { left: x });
        }
        add(area, 'inset-y-0 w-px bg-[#3f4b86]', { left: END });
    }

    // Notes: step below C3, label, [start, end, colour]; m = magenta, v = violet
    const COLORS = {
        m: 'bg-[#7d007b] border border-[#5a0660]',
        v: 'bg-[#5b0098] border border-[#420a70]',
        p: 'bg-[#92477a] border border-[#7c3b68]',
        k: 'bg-[#232426] border border-[#35414c]'
    };
    const NOTES = [
        [-2, 'E3', [[4.12, 4.89, 'p']]],
        [0, 'C3', [[8.5, 9, 'm']]],
        [1, 'B2', [[5, 5.5, 'm'], [8, 8.5, 'k']]],
        [3, 'G2', [[4.5, 4.75, 'm'], [5, 5.5, 'm'], [5.5, 5.75, 'm'], [6, 6.5, 'm'], [7.5, 7.75, 'm'], [8, 8.5, 'm'], [8.5, 9, 'm']]],
        [4, 'F2', [[3.5, 4, 'v'], [4.75, 5, 'm'], [5.75, 6, 'm'], [7.75, 8, 'm']]],
        [5, 'E2', [[2.5, 3, 'm'], [4, 4.5, 'v'], [5, 5.5, 'm'], [6, 6.5, 'm'], [6.5, 7, 'm'], [8, 8.5, 'm'], [8.5, 9, 'm']]],
        [6, 'D2', [[3, 3.5, 'm'], [3.5, 4, 'm'], [4, 4.5, 'm'], [4.5, 4.75, 'm'], [4.75, 5, 'm'], [5.5, 5.75, 'm'], [5.75, 6, 'm'], [7, 7.5, 'm'], [7.5, 7.75, 'm'], [7.75, 8, 'm']]],
        [7, 'C2', [[2.5, 3, 'm'], [3, 3.5, 'm'], [5, 5.5, 'v'], [6, 6.5, 'm'], [6.5, 7, 'm'], [7, 7.5, 'm'], [8, 8.5, 'v'], [8.5, 9, 'v']]],
        [8, 'B1', [[4, 4.5, 'm'], [4.5, 4.75, 'm'], [4.75, 5, 'm'], [5.5, 5.75, 'm'], [5.75, 6, 'm'], [7.5, 7.75, 'm'], [7.75, 8, 'm']]],
        [9, 'A1', [[2.5, 3, 'm'], [3, 3.5, 'm'], [3.5, 4, 'm'], [6, 6.5, 'v'], [6.5, 7, 'm'], [7, 7.5, 'm']]],
        [10, 'G1', [[4, 4.5, 'm'], [4.5, 4.75, 'v'], [4.75, 5, 'v'], [5.5, 5.75, 'v'], [5.75, 6, 'v'], [7.5, 7.75, 'v'], [7.75, 8, 'v']]],
        [11, 'F1', [[2.5, 3, 'v'], [3, 3.5, 'v'], [3.5, 4, 'm'], [6.5, 7, 'v'], [7, 7.5, 'v']]]
    ];
    for (const [step, name, list] of NOTES) {
        for (const [from, to, c] of list) {
            const joined = list.some(n => n[1] === from) ? ' border-l-0 pl-[3px]' : ' pl-[2px]';
            const open = list.some(n => n[0] === to) ? ' border-r-0' : '';
            add(roll, 'leading-[19px] font-semibold ' + COLORS[c] + joined + open,
                { left: xOf(from), top: yOf(step), width: xOf(to) - xOf(from), height: NOTE_H }, name);
        }
    }
    add(roll, 'inset-y-0 w-px bg-[#c9b6d6]/70', { left: HEAD - 1 });
    add(roll, 'inset-y-0 w-px bg-[#0e1a26]', { left: HEAD });
    add(roll, 'inset-y-0 w-px bg-[#c9b6d6]/70', { left: HEAD + 1 });
    add(lane, 'inset-y-0 w-px bg-[#0e1a26]', { left: HEAD });

    // Velocities
    for (const bar of [3, 3.5, 4, 4.5, 4.75, 5, 5.5, 5.75, 6, 6.5, 7, 7.5, 7.75, 8, 8.5]) {
        const c = bar === 8 ? 'bg-black' : bar === 3.5 || bar === 4 ? 'bg-[#6d0a93]' : bar % 1 === 0.5 && bar > 4 && bar < 8 ? 'bg-[#6f2450]' : 'bg-[#7b0f74]';
        add(lane, 'bottom-0 h-[118px] w-[3px] ' + c, { left: xOf(bar) });
    }

    // Pen strokes and pen cursor
    roll.insertAdjacentHTML('beforeend', `
        <svg class="absolute left-[710px] top-[60px] w-[220px] h-[190px]" viewBox="0 0 220 190" fill="none">
            <path d="M14 110V52l4-10 1-12 7-14c4-6 7-8 13-8h9c6 2 10 8 14 14l1 6 4 6v8l3 6 3 16M58 38v10l4 7 6 9 4-7 11-14" stroke="#1208e8" stroke-width="4" stroke-linecap="round" stroke-linejoin="round"/>
            <path d="M178 180l6-1 7-3" stroke="#3a43a0" stroke-width="2"/>
            <path d="M187 157l6 1 15 14-5 6-14-15z" fill="#f2f3f4" stroke="#222" stroke-width="1.500"/>
            <path d="M191 161l13 12" stroke="#444"/>
            <path d="M186 156l2 5 3-3z" stroke="#222" fill="#222"/>
        </svg>`);

    // Inspector functions
    for (const name of ['固定长度', '踏板到音符长度', '删除重叠 （单声道）', '删除重叠 （复音）']) {
        document.getElementById('functions').insertAdjacentHTML('beforeend', `
            <div class="h-[18px] flex items-center justify-between bg-black pl-[3px]">${name}<button aria-label="${name}" class="w-[18px] h-4 mr-px bg-[#6d7074] grid place-items-center"><svg class="w-[10px] h-[10px]" viewBox="0 0 10 10"><circle cx="5" cy="5" r="4" fill="none" stroke="#1a1c1e" stroke-width="1.300"/><path d="M4 3l3 2-3 2z" fill="#1a1c1e"/></svg></button></div>`);
    }
</script>
</body>
</html>
